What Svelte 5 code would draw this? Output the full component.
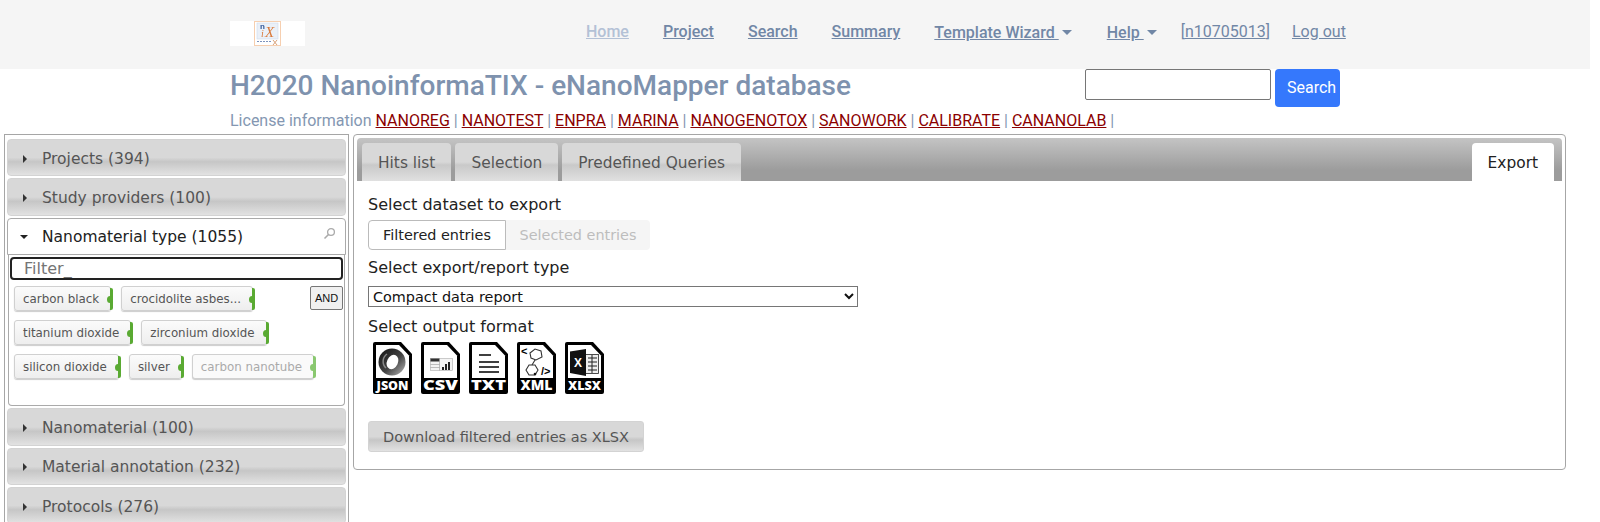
<script>
  const nav = ['Project', 'Search', 'Summary'];
  const licenses = ['NANOREG', 'NANOTEST', 'ENPRA', 'MARINA', 'NANOGENOTOX', 'SANOWORK', 'CALIBRATE', 'CANANOLAB'];
  const tagRows = [
    [{ label: 'carbon black' }, { label: 'crocidolite asbes...' }],
    [{ label: 'titanium dioxide' }, { label: 'zirconium dioxide' }],
    [{ label: 'silicon dioxide' }, { label: 'silver' }, { label: 'carbon nanotube', faded: true }]
  ];
  const formats = [
    { name: 'JSON', size: 12, width: 32 },
    { name: 'CSV', size: 14, width: 35 },
    { name: 'TXT', size: 14, width: 35 },
    { name: 'XML', size: 14, width: 32 },
    { name: 'XLSX', size: 12.5, width: 33 }
  ];
</script>

{#snippet accordion(title)}
  <div class="acc-head">
    <span class="arrow-right"></span>
    <span>{title}</span>
  </div>
{/snippet}

<header class="navbar">
  <div class="logo">
    <svg width="27" height="25" viewBox="0 0 27 25">
      <rect x="0.5" y="0.5" width="26" height="24" fill="#fff" stroke="#f6cfb0" />
      <rect x="3" y="2" width="21" height="16" fill="#eaf0f8" stroke="#cdd9ea" stroke-width="0.6" />
      <text x="6" y="8" class="logo-n">n</text>
      <text x="7" y="16" class="logo-i">i</text>
      <text x="11" y="16" class="logo-x">X</text>
      <path d="M3 20.5h15" stroke="#7d93bd" stroke-width="1.2" stroke-dasharray="2 1" />
      <path d="M19 19l4 5M23 19l-4 5" stroke="#d9a27a" />
    </svg>
  </div>
  <nav class="menu">
    <a href="#home" class="home">Home</a>
    {#each nav as item}
      <a href="#{item}">{item}</a>
    {/each}
    <a href="#wizard" class="drop">Template Wizard <span class="caret"></span></a>
    <a href="#help" class="drop help">Help <span class="caret"></span></a>
    <span class="user">[<a href="#user">n10705013</a>]</span>
    <a href="#logout" class="logout">Log out</a>
  </nav>
</header>

<section class="title-area">
  <div class="title-row">
    <h1>H2020 NanoinformaTIX - eNanoMapper database</h1>
    <form class="search" onsubmit={(e) => e.preventDefault()}>
      <input type="text" />
      <button>Search</button>
    </form>
  </div>
  <p class="license">
    License information
    {#each licenses as lic}
      <a href="#{lic}">{lic}</a> |{' '}
    {/each}
  </p>
</section>

<main class="content">
  <aside class="facets">
    {@render accordion('Projects (394)')}
    {@render accordion('Study providers (100)')}
    <div class="acc-head open">
      <span class="arrow-down"></span>
      <span>Nanomaterial type (1055)</span>
      <svg class="mag" width="13" height="13" viewBox="0 0 13 13">
        <circle cx="8" cy="5" r="3.4" fill="none" stroke="#aaa" stroke-width="1.3" />
        <path d="M5.5 7.5L1.5 11.5" stroke="#aaa" stroke-width="1.6" />
      </svg>
    </div>
    <div class="acc-body">
      <input class="filter" type="text" placeholder="Filter_" />
      <div class="tags">
        <button class="and">AND</button>
        {#each tagRows as row}
          <div class="tag-row">
            {#each row as tag}
              <span class="tag" class:faded={tag.faded}>{tag.label}<i class="tag-end"></i></span>
            {/each}
          </div>
        {/each}
      </div>
    </div>
    {@render accordion('Nanomaterial (100)')}
    {@render accordion('Material annotation (232)')}
    {@render accordion('Protocols (276)')}
  </aside>

  <section class="panel">
    <div class="tabbar">
      <span class="tab">Hits list</span>
      <span class="tab">Selection</span>
      <span class="tab">Predefined Queries</span>
      <span class="tab active">Export</span>
    </div>
    <div class="export">
      <div class="label">Select dataset to export</div>
      <div class="seg">
        <span class="seg-on">Filtered entries</span>
        <span class="seg-off">Selected entries</span>
      </div>
      <div class="label second">Select export/report type</div>
      <select class="type">
        <option>Compact data report</option>
      </select>
      <div class="label third">Select output format</div>
      <div class="formats">
        {#each formats as fmt, i}
          <svg width="40" height="52" viewBox="0 0 40 52">
            <defs>
              <linearGradient id="swirl" x1="0" y1="0" x2="1" y2="1">
                <stop offset="0" stop-color="#111" />
                <stop offset="0.55" stop-color="#444" />
                <stop offset="1" stop-color="#bbb" />
              </linearGradient>
            </defs>
            <path d="M2 0H28L39 12V50a2 2 0 0 1-2 2H2a2 2 0 0 1-2-2V2a2 2 0 0 1 2-2z" fill="#000" />
            <path d="M3 3H26L36 13.5V36H3z" fill="#fff" />
            {#if i === 0}
              <circle cx="19" cy="20" r="13.5" fill="url(#swirl)" />
              <ellipse cx="19.5" cy="20" rx="5.5" ry="7.5" transform="rotate(25 19.5 20)" fill="#fff" />
              <path d="M14 12a9 9 0 0 0-1 14" fill="none" stroke="#888" stroke-width="1.5" />
            {:else if i === 1}
              <rect x="9.5" y="16.5" width="22" height="12" fill="#f4f4f4" stroke="#aaa" stroke-width="0.6" />
              <rect x="9.5" y="16.5" width="9" height="3" fill="#333" />
              <path d="M9.5 22.5h9M9.5 25.5h9M18.5 16.5v12" stroke="#999" stroke-width="0.6" />
              <path d="M22 28v-3M25 28v-6M28 28v-8" stroke="#222" stroke-width="2" />
            {:else if i === 2}
              <path d="M10 13H22M10 20H30M10 25H30M10 30H30" stroke="#000" stroke-width="1.5" />
            {:else if i === 3}
              <text x="4" y="13" class="xml-mark">&lt;</text>
              <path d="M13 11l5-4 6 2 1 6-6 3-5-2zM18 18l-3 5" fill="none" stroke="#333" stroke-width="1.1" />
              <path d="M9 28l3-5 6 0 3 5-3 5-6 0z" fill="none" stroke="#333" stroke-width="1.1" />
              <circle cx="18" cy="32" r="1.3" fill="#111" />
              <text x="24" y="33" class="xml-mark">/&gt;</text>
            {:else}
              <rect x="20.5" y="12.5" width="13" height="19" fill="#eee" stroke="#222" stroke-width="0.8" />
              <path d="M23 16h9M23 20h9M23 24h9M23 28h9M27 13v18" stroke="#222" stroke-width="1" />
              <path d="M5 9.5L21 7V34L5 31z" fill="#111" />
              <text x="9" y="25" class="x-mark">X</text>
            {/if}
            <text x="19.5" y="48" text-anchor="middle" class="fmt" textLength={fmt.width} lengthAdjust="spacingAndGlyphs" style="font-size: {fmt.size}px">{fmt.name}</text>
          </svg>
        {/each}
      </div>
      <button class="download">Download filtered entries as XLSX</button>
    </div>
  </section>
</main>

<style>
  :global(body) {
    margin: 0;
    background: #fff;
    overflow: hidden;
    height: 522px;
    font-family: Roboto, sans-serif;
  }

  .navbar {
    height: 69px;
    width: 1590px;
    background: #f5f5f5;
    display: flex;
    align-items: flex-start;
    box-sizing: border-box;
    padding-left: 230px;
  }

  .logo {
    width: 75px;
    height: 25px;
    margin-top: 21px;
    background: #fff;
    display: flex;
    justify-content: center;
  }

  .logo svg {
    filter: blur(0.4px);
  }

  .logo-n {
    font: 700 8px "Liberation Sans", sans-serif;
    fill: #2f5597;
  }

  .logo-i {
    font: italic 10px "Liberation Serif", serif;
    fill: #d9793a;
  }

  .logo-x {
    font: italic 15px "Liberation Serif", serif;
    fill: #d9793a;
  }

  .menu {
    display: flex;
    align-items: flex-start;
    margin-left: 281px;
    margin-top: 22px;
    font-size: 16px;
    font-weight: 500;
  }

  .menu a {
    color: #7187a6;
    margin-right: 34px;
  }

  .menu a.home {
    color: #b3c1d6;
  }

  .menu a.drop {
    margin-top: 1px;
    margin-right: 35px;
  }

  .menu a.help {
    margin-right: 24px;
  }

  .caret {
    display: inline-block;
    margin-left: 3px;
    vertical-align: 3px;
    border-top: 5px solid #7187a6;
    border-left: 5px solid transparent;
    border-right: 5px solid transparent;
  }

  .user {
    color: #7187a6;
    font-weight: 400;
    margin-right: 22px;
  }

  .user a, .menu a.logout {
    font-weight: 400;
    margin-right: 0;
  }

  .title-area {
    padding-left: 230px;
    height: 65px;
  }

  .title-row {
    display: flex;
    height: 39px;
  }

  h1 {
    margin: 2px 0 0;
    font-size: 28px;
    line-height: 30px;
    font-weight: 500;
    color: #7e92ae;
    width: 855px;
  }

  .search {
    display: flex;
    align-items: flex-start;
    gap: 4px;
  }

  .search input {
    box-sizing: border-box;
    width: 186px;
    height: 31px;
    border: 1px solid #767676;
    border-radius: 2px;
    background: #fff;
    margin: 0;
  }

  .search button {
    width: 65px;
    height: 38px;
    background: #3578fc;
    color: #fff;
    border: 0;
    border-radius: 4px;
    font: 400 16px Roboto, sans-serif;
    padding: 0 0 2px 12px;
    text-align: left;
  }

  .license {
    margin: 0;
    font-size: 16px;
    line-height: 26px;
    color: #8497b2;
    white-space: nowrap;
  }

  .license a {
    color: #8b0000;
  }

  .content {
    display: flex;
    align-items: flex-start;
    padding-left: 4px;
    font-family: "DejaVu Sans", Verdana, sans-serif;
  }

  .facets {
    box-sizing: border-box;
    width: 345px;
    height: 400px;
    border: 1px solid #a6a6a6;
    border-bottom: 0;
    padding: 4px 2px 0;
    flex: none;
  }

  .acc-head {
    height: 37.4px;
    box-sizing: border-box;
    display: flex;
    align-items: center;
    padding: 2px 0 0 14px;
    margin-bottom: 2px;
    border: 1px solid #d3d3d3;
    border-radius: 4px;
    background: linear-gradient(#d8d8d8 50%, #c6c6c6 62%, #e2e2e2 100%);
    color: #555;
    font-size: 15.5px;
  }

  .acc-head.open {
    background: #fff;
    border: 1px solid #aaa;
    border-bottom-left-radius: 0;
    border-bottom-right-radius: 0;
    color: #212121;
    margin-bottom: 0;
    padding-top: 1px;
    position: relative;
  }

  .arrow-right {
    width: 0;
    height: 0;
    border-left: 4px solid #333;
    border-top: 4px solid transparent;
    border-bottom: 4px solid transparent;
    margin-right: 15px;
    margin-left: 1px;
  }

  .arrow-down {
    width: 0;
    height: 0;
    border-top: 4px solid #222;
    border-left: 4px solid transparent;
    border-right: 4px solid transparent;
    margin-right: 14px;
    margin-left: -2px;
  }

  .mag {
    position: absolute;
    right: 9px;
    top: 8px;
  }

  .acc-body {
    box-sizing: border-box;
    height: 151px;
    margin: 0 1px 2px;
    border: 1px solid #aaa;
    border-top: 0;
    border-radius: 0 0 4px 4px;
    padding: 2px 1px 0;
  }

  .filter {
    display: block;
    box-sizing: border-box;
    width: 100%;
    height: 23px;
    border: 2px solid #222;
    border-radius: 4px;
    padding: 0 12px;
    font: 16px "DejaVu Sans", sans-serif;
    margin: 0;
  }

  .filter::placeholder {
    color: #757575;
  }

  .tags {
    position: relative;
    padding: 6px 0 0 4px;
  }

  .and {
    position: absolute;
    right: 0;
    top: 5.5px;
    width: 33px;
    height: 24px;
    padding: 0;
    box-sizing: border-box;
    background: #f0f0f0;
    border: 1px solid #767676;
    border-radius: 2px;
    font: 11px "Liberation Sans", sans-serif;
    color: #111;
  }

  .tag-row {
    display: flex;
    gap: 10px;
    height: 34px;
  }

  .tag {
    box-sizing: border-box;
    height: 25px;
    display: inline-flex;
    align-items: center;
    position: relative;
    padding: 0 11px 0 8px;
    border: 1px solid #d0d0d0;
    border-radius: 3px;
    background: linear-gradient(#fbfbfb, #eee);
    box-shadow: 0 1px 1px #ccc;
    color: #555;
    font-size: 11.85px;
    white-space: nowrap;
  }

  .tag.faded {
    color: #aaa;
    background: #fafafa;
  }

  .tag-end {
    position: absolute;
    right: -3px;
    top: 1px;
    bottom: 0;
    width: 3px;
    background: #5aaa33;
    border-radius: 0 2px 2px 0;
  }

  .tag-end::before {
    content: '';
    position: absolute;
    left: -3px;
    top: 8px;
    width: 6px;
    height: 7px;
    background: #5aaa33;
    border-radius: 50%;
  }

  .tag.faded .tag-end, .tag.faded .tag-end::before {
    background: #8ac870;
  }

  .panel {
    box-sizing: border-box;
    width: 1213px;
    height: 336px;
    margin-left: 4px;
    border: 1px solid #a6a6a6;
    border-radius: 4px;
    padding: 3px;
    flex: none;
  }

  .tabbar {
    height: 43px;
    border-radius: 4px 4px 0 0;
    background: linear-gradient(#c4c4c4, #9c9c9c 75%);
    display: flex;
    align-items: flex-end;
    padding-left: 5px;
    gap: 4px;
    font-size: 15.4px;
  }

  .tab {
    box-sizing: border-box;
    height: 38px;
    padding: 2px 16px 0;
    display: flex;
    align-items: center;
    border-radius: 4px 4px 0 0;
    background: linear-gradient(#d8d8d8 50%, #c9c9c9 58%, #e0e0e0);
    color: #555;
  }

  .tab.active {
    margin-left: auto;
    margin-right: 8px;
    background: #fff;
    color: #212121;
  }

  .export {
    padding: 12px 11px 0;
    font-size: 16px;
    color: #222;
  }

  .label {
    height: 23px;
    line-height: 23px;
  }

  .seg {
    display: flex;
    margin-top: 4px;
    height: 30px;
    width: 282px;
    font-size: 14.4px;
  }

  .seg span {
    display: flex;
    align-items: center;
    justify-content: center;
    box-sizing: border-box;
  }

  .seg-on {
    width: 138px;
    border: 1px solid #bbb;
    border-radius: 4px 0 0 4px;
    color: #222;
  }

  .seg-off {
    flex: 1;
    background: #f5f5f5;
    border-radius: 0 4px 4px 0;
    color: #bdbdbd;
  }

  .second {
    margin-top: 6px;
  }

  .type {
    display: block;
    width: 490px;
    height: 21px;
    margin-top: 7px;
    padding: 0;
    border: 1px solid #767676;
    border-radius: 0;
    background: #fff;
    font: 14.4px "DejaVu Sans", sans-serif;
    color: #111;
  }

  .third {
    margin-top: 8px;
  }

  .formats {
    display: flex;
    gap: 8px;
    margin-top: 4px;
    padding-left: 5px;
  }

  .fmt {
    font-family: "Open Sans", "Liberation Sans", sans-serif;
    font-weight: 800;
    fill: #fff;
  }

  .x-mark {
    font: 700 12px "Liberation Sans", sans-serif;
    fill: #fff;
  }

  .xml-mark {
    font: 700 11px "Liberation Sans", sans-serif;
    fill: #000;
  }

  .download {
    display: block;
    width: 276px;
    height: 31px;
    margin-top: 27px;
    padding: 0;
    border: 1px solid #d3d3d3;
    border-radius: 3px;
    background: linear-gradient(#d8d8d8 50%, #c6c6c6 62%, #e2e2e2);
    color: #555;
    font: 14.5px "DejaVu Sans", sans-serif;
  }
</style>
